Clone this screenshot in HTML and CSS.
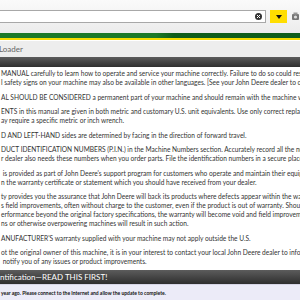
FILE: index.html
```html
<!DOCTYPE html>
<html lang="en">
<head>
  <meta charset="UTF-8" />
  <title>Operator's Manual - Loader</title>
  <link rel="stylesheet" href="styles.css">
</head>
<body>
  <div class="toolbar">
    <div class="search">
      <span class="clear">
        <svg width="7" height="7" viewBox="0 0 7 7"><circle cx="3.5" cy="3.5" r="3.5" fill="#333"/><path d="M2 2L5 5M5 2L2 5" stroke="#fff" stroke-width="1"/></svg>
      </span>
    </div>
    <button class="go">
      <svg width="6" height="4" viewBox="0 0 6 4"><path d="M0 0H6L3 4Z" fill="#111"/></svg>
    </button>
    <span class="tool">
      <svg width="9" height="9" viewBox="0 0 9 9"><rect x="1" y="2" width="7" height="6" rx="1" fill="#777"/><circle cx="4.5" cy="5" r="1.6" fill="#ddd"/><rect x="2.5" y="0.5" width="4" height="2" fill="#999"/></svg>
    </span>
  </div>
  <div class="brand-stripe">
    <div class="green"></div>
    <div class="yellow"></div>
  </div>
  <div class="title-bar">Loader</div>
  <div class="dark-bar"></div>

  <div class="content">
    <p>
      <span>MANUAL carefully to learn how to operate and service your machine correctly. Failure to do so could result in personal injury or equipment damage.</span>
      <span>l safety signs on your machine may also be available in other languages. [See your John Deere dealer to order.]</span>
    </p>
    <p>
      <span>AL SHOULD BE CONSIDERED a permanent part of your machine and should remain with the machine when you sell it.</span>
    </p>
    <p>
      <span>ENTS in this manual are given in both metric and customary U.S. unit equivalents. Use only correct replacement parts and fasteners.</span>
      <span>ay require a specific metric or inch wrench.</span>
    </p>
    <p>
      <span>D AND LEFT-HAND sides are determined by facing in the direction of forward travel.</span>
    </p>
    <p>
      <span>DUCT IDENTIFICATION NUMBERS (P.I.N.) in the Machine Numbers section. Accurately record all the numbers to help in tracing the machine.</span>
      <span>r dealer also needs these numbers when you order parts. File the identification numbers in a secure place off the machine.</span>
    </p>
    <p>
      <span>&nbsp;is provided as part of John Deere's support program for customers who operate and maintain their equipment as described.</span>
      <span>n the warranty certificate or statement which you should have received from your dealer.</span>
    </p>
    <p>
      <span>ty provides you the assurance that John Deere will back its products where defects appear within the warranty period.</span>
      <span>s field improvements, often without charge to the customer, even if the product is out of warranty. Should the equipment be abused,</span>
      <span>erformance beyond the original factory specifications, the warranty will become void and field improvements may be denied.</span>
      <span>ns or otherwise overpowering machines will result in such action.</span>
    </p>
    <p>
      <span>ANUFACTURER'S warranty supplied with your machine may not apply outside the U.S.</span>
    </p>
    <p>
      <span>ot the original owner of this machine, it is in your interest to contact your local John Deere dealer to inform them</span>
      <span>&nbsp;notify you of any issues or product improvements.</span>
    </p>
  </div>

  <div class="section-bar">ntification&mdash;READ THIS FIRST!</div>
  <div class="notice">year ago. Please connect to the Internet and allow the update to complete.</div>
</body>
</html>
```

FILE: styles.css
```css
* {
  margin: 0;
  padding: 0;
  box-sizing: border-box;
}

body {
  width: 300px;
  height: 300px;
  overflow: hidden;
  background-color: #fff;
  font-family: 'Lato', 'Liberation Sans', sans-serif;
  color: #333;
}

.toolbar {
  display: flex;
  align-items: center;
  height: 33px;
  padding-top: 10px;
  padding-bottom: 10px;
  background: linear-gradient(#fafafa, #ececec);
}

.search {
  flex: 1;
  height: 13px;
  display: flex;
  align-items: center;
  justify-content: flex-end;
  padding-right: 3px;
  background-color: #fff;
  border: 1px solid #a8a8a8;
  border-left: none;
}

.clear svg {
  display: block;
}

.go {
  width: 17px;
  height: 13px;
  margin-left: 4px;
  display: flex;
  align-items: center;
  justify-content: center;
  background-color: #ffde00;
  border: none;
}

.tool {
  width: 13px;
  display: flex;
  justify-content: flex-end;
}

.brand-stripe .green {
  height: 5px;
  background-color: #1c7a2a;
  background-image: linear-gradient(90deg, transparent 52%, rgba(0, 60, 10, 0.45) 58%);
}

.brand-stripe .yellow {
  height: 2px;
  background-color: #f7dc00;
}

.title-bar {
  height: 17px;
  line-height: 17px;
  font-size: 8px;
  color: #666;
  background-color: #ededed;
  border-top: 1px solid #fff;
  text-indent: -1px;
}

.dark-bar {
  height: 10px;
  background: linear-gradient(#5b5b5b, #2f2f2f);
}

.content {
  padding-top: 2px;
  height: 203px;
  overflow: hidden;
}

.content p {
  margin-bottom: 5.5px;
}

.content span {
  display: block;
  white-space: nowrap;
  font-size: 6.6px;
  line-height: 9px;
  padding-left: 1px;
}

.section-bar {
  height: 14px;
  line-height: 14px;
  font-size: 8px;
  color: #fff;
  white-space: nowrap;
  background: linear-gradient(#5c5c5c, #2e2e2e);
}

.notice {
  height: 16px;
  line-height: 16px;
  padding-left: 1px;
  font-size: 5px;
  font-weight: bold;
  color: #111;
  white-space: nowrap;
  background-color: #ecebf8;
  border-top: 1px solid #d6d5e6;
}
```
